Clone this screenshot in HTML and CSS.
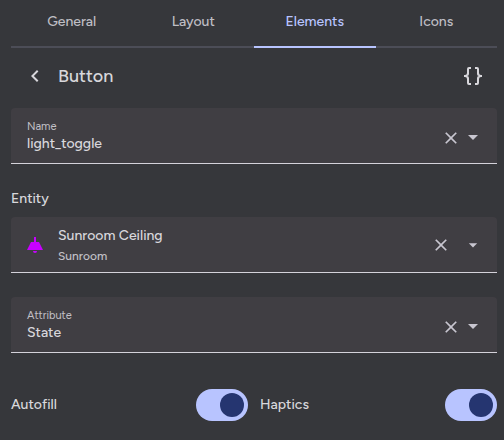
FILE: index.html
```html
<!DOCTYPE html>
<html lang="en">
<head>
<meta charset="utf-8">
<meta name="viewport" content="width=device-width, initial-scale=1">
<title>Button</title>
<link rel="stylesheet" href="styles.css">
</head>
<body>
<main class="editor">
  <nav class="tabs" role="tablist">
    <button class="tab" role="tab" aria-selected="false">General</button>
    <button class="tab" role="tab" aria-selected="false">Layout</button>
    <button class="tab" role="tab" aria-selected="true">Elements</button>
    <button class="tab" role="tab" aria-selected="false">Icons</button>
  </nav>

  <header class="header">
    <button class="icon-button" aria-label="Back">
      <svg class="icon" viewBox="0 0 24 24"><path d="M15.41 16.58L10.83 12l4.58-4.59L14 6l-6 6 6 6z"/></svg>
    </button>
    <h1 class="title">Button</h1>
    <button class="icon-button" aria-label="Edit code">
      <svg class="icon" viewBox="0 0 24 24"><path d="M8 3a2 2 0 0 0-2 2v4a2 2 0 0 1-2 2H3v2h1a2 2 0 0 1 2 2v4a2 2 0 0 0 2 2h2v-2H8v-5a2 2 0 0 0-2-2 2 2 0 0 0 2-2V5h2V3m6 0a2 2 0 0 1 2 2v4a2 2 0 0 0 2 2h1v2h-1a2 2 0 0 0-2 2v4a2 2 0 0 1-2 2h-2v-2h2v-5a2 2 0 0 1 2-2 2 2 0 0 1-2-2V5h-2V3z"/></svg>
    </button>
  </header>

  <div class="field">
    <div class="field-text">
      <label class="field-label" for="name">Name</label>
      <input class="field-input" id="name" type="text" value="light_toggle">
    </div>
    <button class="clear" aria-label="Clear name">
      <svg class="icon-small" viewBox="0 0 24 24"><path d="M19 6.41L17.59 5 12 10.59 6.41 5 5 6.41 10.59 12 5 17.59 6.41 19 12 13.41 17.59 19 19 17.59 13.41 12z"/></svg>
    </button>
    <button class="clear" aria-label="Open name list">
      <svg class="icon" viewBox="0 0 24 24"><path d="M7 9l5 5 5-5z"/></svg>
    </button>
  </div>

  <h2 class="section" id="entity-heading">Entity</h2>
  <div class="field field-entity" role="group" aria-labelledby="entity-heading">
    <svg class="lamp" viewBox="0 0 16 16"><path d="M7 0h2v5h3l4 8H0l4-8h3zM6 14h4q0 2-2 2t-2-2z"/></svg>
    <button class="entity">
      <span class="entity-name">Sunroom Ceiling</span>
      <span class="entity-area">Sunroom</span>
    </button>
    <button class="clear" aria-label="Clear entity">
      <svg class="icon-small" viewBox="0 0 24 24"><path d="M19 6.41L17.59 5 12 10.59 6.41 5 5 6.41 10.59 12 5 17.59 6.41 19 12 13.41 17.59 19 19 17.59 13.41 12z"/></svg>
    </button>
    <button class="clear" aria-label="Open entity list">
      <svg class="icon-small" viewBox="0 0 24 24"><path d="M7 10l5 5 5-5z"/></svg>
    </button>
  </div>

  <div class="field field-attribute">
    <div class="field-text">
      <label class="field-label" for="attribute">Attribute</label>
      <input class="field-input" id="attribute" type="text" value="State">
    </div>
    <button class="clear" aria-label="Clear attribute">
      <svg class="icon-small" viewBox="0 0 24 24"><path d="M19 6.41L17.59 5 12 10.59 6.41 5 5 6.41 10.59 12 5 17.59 6.41 19 12 13.41 17.59 19 19 17.59 13.41 12z"/></svg>
    </button>
    <button class="clear" aria-label="Open attribute list">
      <svg class="icon" viewBox="0 0 24 24"><path d="M7 9l5 5 5-5z"/></svg>
    </button>
  </div>

  <div class="switches">
    <label class="switch-row">Autofill<input class="switch" type="checkbox" role="switch" checked></label>
    <label class="switch-row">Haptics<input class="switch" type="checkbox" role="switch" checked></label>
  </div>
</main>
</body>
</html>
```
FILE: styles.css
```css
* {
  box-sizing: border-box;
}

body {
  margin: 0;
  background: #36373b;
  color: #d8d7dc;
  font: 500 14px/20px Figtree, Inter, sans-serif;
}

button,
input {
  margin: 0;
  padding: 0;
  border: 0;
  background: none;
  color: inherit;
  font: inherit;
}

svg {
  display: block;
  fill: currentColor;
}

.editor {
  padding: 0 7px 19px 11px;
}

.tabs {
  display: grid;
  grid-template-columns: repeat(4, 1fr);
}

.tab {
  height: 48px;
  padding-bottom: 2px;
  border-bottom: 2px solid #4c4d57;
  color: #bfbec4;
}

.tab[aria-selected="true"] {
  border-color: #b8c4ff;
  color: #b8c4ff;
}

.header {
  display: flex;
  align-items: center;
  height: 56px;
  padding: 0 12px;
}

.icon {
  width: 24px;
  height: 24px;
}

.icon-small {
  width: 20px;
  height: 20px;
}

.title {
  flex: 1;
  margin: 0;
  padding-left: 11px;
  font-size: 18px;
  font-weight: 500;
  line-height: 24px;
}

.field {
  display: flex;
  align-items: center;
  height: 56px;
  margin-top: 4px;
  padding: 4px 12px 0 16px;
  border-bottom: 1px solid #d4d2da;
  border-radius: 4px 4px 0 0;
  background: #403e43;
}

.field-text {
  display: flex;
  flex: 1;
  flex-direction: column;
  min-width: 0;
  padding-bottom: 2px;
}

.field-label {
  color: #c2c0c7;
  font-size: 11px;
  font-weight: 400;
  line-height: 14px;
}

.field-input {
  width: 100%;
  height: 20px;
}

.clear {
  color: #c8c6d0;
}

.section {
  margin: 25px 0 0;
  font-size: 14px;
  font-weight: 500;
  line-height: 20px;
}

.field-entity {
  margin-top: 8px;
  padding: 0 14px 0 16px;
}

.field-entity .clear + .clear {
  margin-left: 12px;
}

.lamp {
  width: 16px;
  height: 16px;
  color: #c800ff;
}

.entity {
  display: flex;
  flex: 1;
  flex-direction: column;
  padding: 2px 0 0 15px;
  text-align: left;
}

.entity-area {
  color: #c2c0c7;
  font-size: 12px;
}

.field-attribute {
  margin-top: 24px;
}

.switches {
  display: grid;
  grid-template-columns: 1fr 1fr;
  gap: 12px;
  margin-top: 36px;
}

.switch-row {
  display: flex;
  align-items: center;
  justify-content: space-between;
}

.switch {
  display: flex;
  align-items: center;
  width: 52px;
  height: 32px;
  padding: 4px;
  border-radius: 16px;
  background: #b8c4ff;
  appearance: none;
}

.switch::before {
  width: 24px;
  height: 24px;
  border-radius: 50%;
  background: #253570;
  content: "";
}

.switch:checked {
  justify-content: flex-end;
}
```
